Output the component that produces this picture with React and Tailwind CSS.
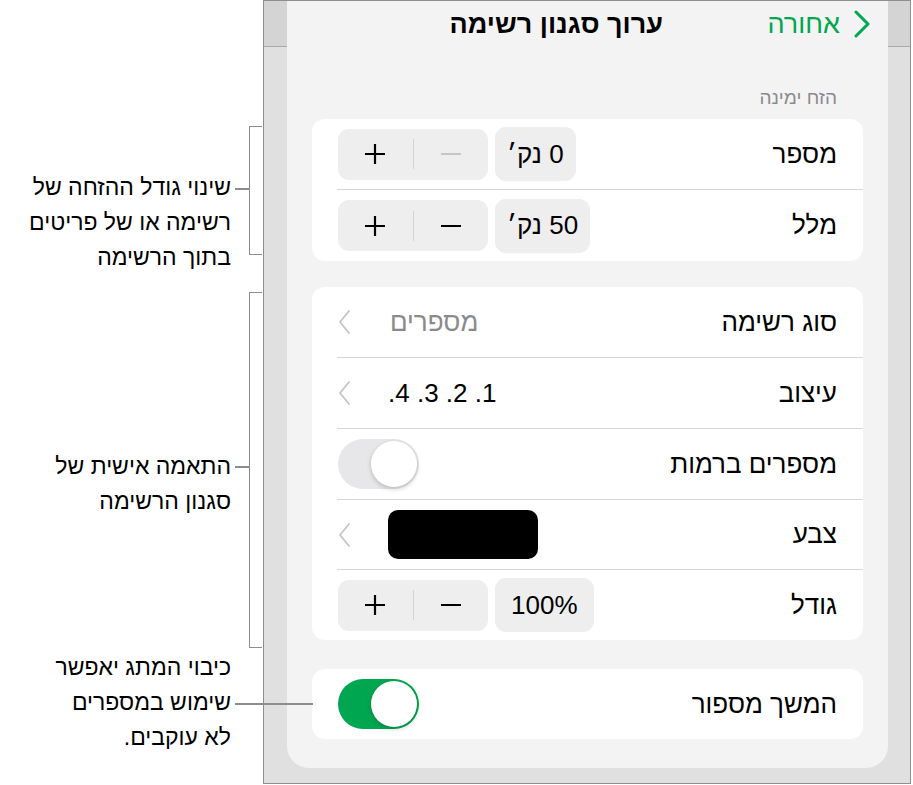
import React from 'react';

const font = { fontFamily: '"Liberation Sans", "DejaVu Sans", sans-serif' };

const Plus = ({ color = '#000' }) => (
  <svg width="22" height="22" viewBox="0 0 22 22">
    <path d="M11 1v20M1 11h20" stroke={color} strokeWidth="2.2" />
  </svg>
);

const Minus = ({ color = '#000' }) => (
  <svg width="22" height="22" viewBox="0 0 22 22">
    <path d="M1 11h20" stroke={color} strokeWidth="2.2" />
  </svg>
);

const Chevron = () => (
  <svg width="12" height="26" viewBox="0 0 12 26" className="shrink-0">
    <path d="M11 2L2 13l9 11" fill="none" stroke="#c4c4c8" strokeWidth="1.8" strokeLinecap="round" strokeLinejoin="round" />
  </svg>
);

const Stepper = ({ minusDisabled }) => (
  <div className="flex h-[51px] w-[150px] items-center rounded-[11px] bg-[#eeeeef]" dir="ltr">
    <div className="flex flex-1 items-center justify-center">
      <Plus />
    </div>
    <div className="h-[30px] w-px bg-[#d3d3d6]" />
    <div className="flex flex-1 items-center justify-center">
      <Minus color={minusDisabled ? '#c6c6ca' : '#000'} />
    </div>
  </div>
);

const Pill = ({ children, wide }) => (
  <div
    className={`flex h-[54px] items-center rounded-[11px] bg-[#eeeeef] text-[26px] text-black ${
      wide ? 'px-[16px]' : 'px-[12px]'
    }`}
  >
    {children}
  </div>
);

const Toggle = ({ on }) => (
  <div
    className={`flex h-[50px] w-[81px] items-center justify-end rounded-full p-[2px] ${
      on ? 'bg-[#00a650]' : 'bg-[#e7e7ea]'
    }`}
    dir="ltr"
  >
    <div className="h-[46px] w-[46px] rounded-full bg-white shadow-[0_2px_5px_rgba(0,0,0,0.2)]" />
  </div>
);

const Row = ({ label, children, last, h = 'h-[71px]' }) => (
  <div className={`flex ${h} flex-col`}>
    <div className="flex flex-1 items-center justify-between pr-[26px] pl-[26px]">
      <span className="text-[26px] text-black">{label}</span>
      <div className="flex items-center gap-[7px]">{children}</div>
    </div>
    {!last && <div className="ml-[25px] h-px bg-[#d6d6d9]" />}
  </div>
);

const Card = ({ children }) => (
  <div className="overflow-hidden rounded-[13px] bg-white" dir="rtl">
    {children}
  </div>
);

const Callout = ({ lines, className }) => (
  <div className={`absolute right-[682px] text-right text-[23px] leading-[35px] text-black ${className}`} dir="rtl">
    {lines.map((l) => (
      <div key={l}>{l}</div>
    ))}
  </div>
);

export default function App() {
  return (
    <div className="relative flex h-[785px] w-[913px] overflow-hidden bg-white" style={font}>
      {/* annotations */}
      <Callout className="top-[170px]" lines={['שינוי גודל ההזחה של', 'רשימה או של פריטים', 'בתוך הרשימה']} />
      <Callout className="top-[449px]" lines={['התאמה אישית של', 'סגנון הרשימה']} />
      <Callout className="top-[650px]" lines={['כיבוי המתג יאפשר', 'שימוש במספרים', 'לא עוקבים.']} />

      {/* bracket 1 */}
      <div className="absolute left-[249px] top-[126px] h-[129px] w-[13px] border-y-[1.5px] border-l-[1.5px] border-[#8c8c8c]" />
      <div className="absolute left-[235px] top-[188px] h-[1.5px] w-[14px] bg-[#8c8c8c]" />
      {/* bracket 2 */}
      <div className="absolute left-[249px] top-[292px] h-[356px] w-[13px] border-y-[1.5px] border-l-[1.5px] border-[#8c8c8c]" />
      <div className="absolute left-[235px] top-[466px] h-[1.5px] w-[14px] bg-[#8c8c8c]" />
      {/* pointer 3 */}
      <div className="absolute left-[235px] top-[703px] z-10 h-[1.5px] w-[78px] bg-[#8c8c8c]" />

      <div className="ml-[263px] flex h-[784px] w-[648px] border border-[#8e8e8e] bg-[#e0e0e0]">
        <div className="flex w-[23px] flex-col">
          <div className="h-[46px] border-b border-[#a9a9a9] bg-[#d4d4d4]" />
        </div>

        <div className="flex h-[767px] w-[601px] flex-col rounded-b-[22px] bg-[#f3f3f3] px-[25px]">
          <div className="flex h-[46px] items-center -mx-[25px]" dir="ltr">
            <div className="flex-1 pl-[58px] text-center text-[27px] font-bold text-black" dir="rtl">
              ערוך סגנון רשימה
            </div>
            <div className="flex items-center gap-[13px] pr-[17px]">
              <span className="text-[27px] text-[#00a650]" dir="rtl">אחורה</span>
              <svg width="18" height="28" viewBox="0 0 18 28">
                <path d="M3 2l12 12L3 26" fill="none" stroke="#00a650" strokeWidth="3" strokeLinecap="round" strokeLinejoin="round" />
              </svg>
            </div>
          </div>

          <div className="mt-[40px] pr-[26px] text-right text-[19px] leading-[22px] text-[#8a8a8e]" dir="rtl">
            הזח ימינה
          </div>

          <div className="mt-[10px]">
            <Card>
              <Row label="מספר">
                <Pill>0 נק׳</Pill>
                <Stepper minusDisabled />
              </Row>
              <Row label="מלל" last>
                <Pill>50 נק׳</Pill>
                <Stepper />
              </Row>
            </Card>
          </div>

          <div className="mt-[26px]">
            <Card>
              <Row label="סוג רשימה">
                <span className="ml-[33px] text-[26px] text-[#8a8a8e]">מספרים</span>
                <Chevron />
              </Row>
              <Row label="עיצוב">
                <span className="ml-[31px] text-[26px] text-black">1. 2. 3. 4.</span>
                <Chevron />
              </Row>
              <Row label="מספרים ברמות">
                <Toggle />
              </Row>
              <Row label="צבע" h="h-[70px]">
                <div className="ml-[31px] h-[49px] w-[150px] rounded-[10px] bg-black" />
                <Chevron />
              </Row>
              <Row label="גודל" last h="h-[70px]">
                <Pill wide>100%</Pill>
                <Stepper />
              </Row>
            </Card>
          </div>

          <div className="mt-[29px]">
            <Card>
              <Row label="המשך מספור" last h="h-[70px]">
                <Toggle on />
              </Row>
            </Card>
          </div>
        </div>

        <div className="flex flex-1 flex-col">
          <div className="h-[46px] border-b border-[#a9a9a9] bg-[#d4d4d4]" />
        </div>
      </div>
    </div>
  );
}
